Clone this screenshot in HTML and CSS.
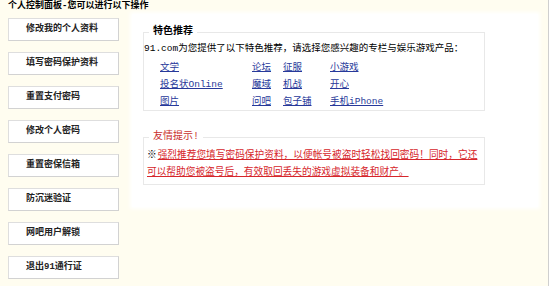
FILE: index.html
```html
<!DOCTYPE html>
<html lang="zh-CN">
<head>
    <meta charset="UTF-8">
    <title>个人控制面板</title>
    <link rel="stylesheet" href="styles.css">
</head>
<body>
    <div class="frame">
        <h1 class="title">个人控制面板-您可以进行以下操作</h1>
        <div class="main">
            <div class="menu">
                <a class="menu-item" href="#">修改我的个人资料</a>
                <a class="menu-item" href="#">填写密码保护资料</a>
                <a class="menu-item" href="#">重置支付密码</a>
                <a class="menu-item" href="#">修改个人密码</a>
                <a class="menu-item" href="#">重置密保信箱</a>
                <a class="menu-item" href="#">防沉迷验证</a>
                <a class="menu-item" href="#">网吧用户解锁</a>
                <a class="menu-item" href="#">退出91通行证</a>
            </div>
            <div class="panel">
                <fieldset class="box">
                    <legend class="box-title">特色推荐</legend>
                    <p class="intro">91.com为您提供了以下特色推荐，请选择您感兴趣的专栏与娱乐游戏产品：</p>
                    <div class="links">
                        <a href="#">文学</a>
                        <a href="#">论坛</a>
                        <a href="#">征服</a>
                        <a href="#">小游戏</a>
                        <a href="#">投名状Online</a>
                        <a href="#">魔域</a>
                        <a href="#">机战</a>
                        <a href="#">开心</a>
                        <a href="#">图片</a>
                        <a href="#">问吧</a>
                        <a href="#">包子铺</a>
                        <a href="#">手机iPhone</a>
                    </div>
                </fieldset>
                <fieldset class="box tip">
                    <legend class="tip-title">友情提示!</legend>
                    <p class="tip-text"><span class="mark">※</span><a href="#">强烈推荐您填写密码保护资料，以便帐号被盗时轻松找回密码！同时，它还可以帮助您被盗号后，有效取回丢失的游戏虚拟装备和财产。</a></p>
                </fieldset>
            </div>
        </div>
    </div>
</body>
</html>
```

FILE: styles.css
```css
html {
    background: #fff;
}
body {
    margin: 0;
    font-family: "Liberation Mono", "Noto Sans CJK SC", monospace;
    font-size: 9.5px;
    color: #000;
}
.frame {
    width: 548px;
    height: 286px;
    background: #fffdf0;
    border-right: 1px solid #cfcfcf;
}
.title {
    margin: 0;
    padding: 1px 0 0 8px;
    height: 13px;
    font-size: 9px;
    line-height: 11px;
    font-weight: bold;
}
.main {
    display: flex;
    align-items: flex-start;
}
.menu {
    width: 111px;
    margin: 4px 0 0 8px;
    display: flex;
    flex-direction: column;
    gap: 11px;
}
.menu-item {
    display: block;
    height: 21px;
    line-height: 21px;
    padding-left: 17px;
    background: #fff;
    border: 1px solid #dedede;
    border-right-color: #d2d2d2;
    border-bottom-color: #d2d2d2;
    color: #222;
    font-size: 9px;
    font-weight: bold;
    text-decoration: none;
}
.panel {
    width: 395px;
    height: 182px;
    margin-left: 13px;
    padding: 11px 0 0 11px;
    background: #fff;
    box-shadow: 0 0 4px 2px #fff;
}
.box {
    width: 340px;
    margin: 0;
    padding: 1px 0 0 0;
    border: 1px solid #e8e8e8;
}
.box-title {
    margin-left: 5px;
    padding: 0 4px;
    font-size: 10px;
    line-height: 14px;
    font-weight: bold;
}
.intro {
    margin: 0 0 2px;
    line-height: 17px;
}
.links {
    display: grid;
    grid-template-columns: 92px 31px 47px auto;
    padding-left: 16px;
    line-height: 17px;
}
.links a {
    color: #27399a;
}
.tip {
    width: 332px;
    margin-top: 19px;
    padding: 2px 5px 3px 3px;
}
.tip-title {
    margin-left: 2px;
    padding: 0 4px;
    font-size: 10px;
    line-height: 14px;
    color: #c9302c;
}
.tip-text {
    margin: 0;
    font-size: 9.7px;
    line-height: 17px;
}
.mark {
    margin-right: 1px;
    font-family: "Noto Sans CJK SC", sans-serif;
}
.tip-text a {
    color: #d6262b;
}
```
